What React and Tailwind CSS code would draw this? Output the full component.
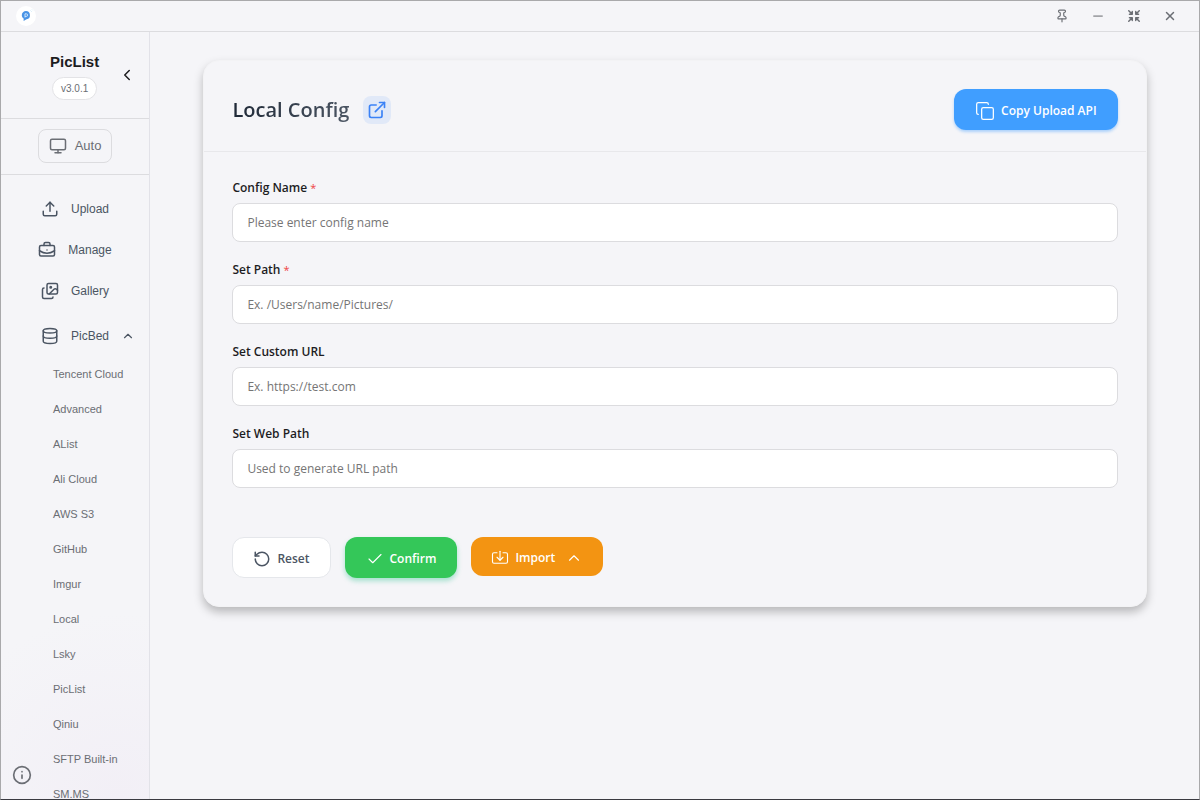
import {
  BriefcaseBusiness,
  Check,
  ChevronLeft,
  ChevronUp,
  Copy,
  Database,
  ExternalLink,
  Images,
  Import,
  Info,
  Minus,
  Monitor,
  Pin,
  RotateCcw,
  Shrink,
  Upload,
  X,
} from 'lucide-react';

const picBeds = [
  'Tencent Cloud',
  'Advanced',
  'AList',
  'Ali Cloud',
  'AWS S3',
  'GitHub',
  'Imgur',
  'Local',
  'Lsky',
  'PicList',
  'Qiniu',
  'SFTP Built-in',
  'SM.MS',
];

const fields = [
  { id: 'name', label: 'Config Name', placeholder: 'Please enter config name', required: true },
  { id: 'path', label: 'Set Path', placeholder: 'Ex. /Users/name/Pictures/', required: true },
  { id: 'customUrl', label: 'Set Custom URL', placeholder: 'Ex. https://test.com' },
  { id: 'webPath', label: 'Set Web Path', placeholder: 'Used to generate URL path' },
];

const Logo = () => (
  <svg viewBox="0 0 20 20" className="size-5" aria-hidden="true">
    <circle cx="10" cy="10" r="10" fill="#fff" />
    <path d="M10 5a4.2 4.2 0 0 0-4.2 4.2c0 1.5.8 2.7 1.9 3.4L7.6 15l3-1.7A4.2 4.2 0 0 0 10 5Z" fill="#4a94e6" />
    <path d="M9 11.5V7.8h1.3a1.3 1.3 0 0 1 0 2.6H9" fill="none" stroke="#d8ecff" strokeWidth="0.9" />
    <path d="M14.5 4.5l1.2 1.2M16 3.5l.8.8" stroke="#c5e6f8" strokeWidth="0.8" />
  </svg>
);

const TitleBar = () => (
  <header className="flex h-[31px] shrink-0 items-center justify-between border-b border-[#dcdcdf] pr-[21px] pl-[15px] text-[#6b6e74]">
    <Logo />
    <div className="flex items-center gap-5">
      <button type="button" aria-label="Pin window" className="flex size-4 items-center justify-center">
        <Pin size={14} />
      </button>
      <button type="button" aria-label="Minimize" className="flex size-4 items-center justify-center text-[#a3a4a8]">
        <Minus size={14} strokeWidth={3} />
      </button>
      <button type="button" aria-label="Restore" className="flex size-4 items-center justify-center">
        <Shrink size={14} strokeWidth={2.5} />
      </button>
      <button type="button" aria-label="Close" className="flex size-4 items-center justify-center">
        <X size={14} strokeWidth={2.5} />
      </button>
    </div>
  </header>
);

const NavItem = ({ icon: Icon, label }) => (
  <a href="#" className="flex h-[41px] items-center justify-center gap-3 text-[12px]">
    <Icon size={18} />
    {label}
  </a>
);

const Sidebar = () => (
  <aside className="relative flex w-[149px] shrink-0 flex-col border-r border-[#e2e2e8] bg-[radial-gradient(circle_at_80%_100%,#f2eff6_0%,#f5f5f8_24%)] font-['Liberation_Sans',sans-serif] text-[#4b5563]">
    <div className="flex h-[87px] shrink-0 items-center border-b border-[#dcdcdf] pr-[13px] pl-[49px]">
      <div className="flex flex-1 flex-col items-start pt-0.5">
        <span className="text-[15px] leading-5 font-bold text-[#1d1d1f]">PicList</span>
        <span className="mt-[5px] ml-[2px] flex h-[23px] items-center rounded-full border border-[#e3e3e6] bg-white px-2 text-[10px] text-[#6b6e74]">
          v3.0.1
        </span>
      </div>
      <button type="button" aria-label="Collapse sidebar" className="text-[#1d1d1f]">
        <ChevronLeft size={18} />
      </button>
    </div>
    <div className="flex h-14 shrink-0 items-center justify-center border-b border-[#dcdcdf] pb-0.5">
      <button
        type="button"
        className="flex h-[34px] items-center gap-2 rounded-lg border border-[#dcdcdf] px-[10px] text-[13px] text-[#6b6e74]"
      >
        <Monitor size={18} />
        Auto
      </button>
    </div>
    <nav className="min-h-0 flex-1 overflow-hidden pt-[13px]">
      <NavItem icon={Upload} label="Upload" />
      <NavItem icon={BriefcaseBusiness} label="Manage" />
      <NavItem icon={Images} label="Gallery" />
      <button type="button" className="flex h-[49px] w-full items-center gap-3 pl-10 text-[12px]">
        <Database size={18} />
        PicBed
        <ChevronUp size={14} />
      </button>
      <ul className="pl-[52px] text-[11px] text-[#6b6e74]">
        {picBeds.map((name) => (
          <li key={name}>
            <a href="#" className="flex h-[35px] items-center pb-1.5">
              {name}
            </a>
          </li>
        ))}
      </ul>
    </nav>
    <button type="button" aria-label="About" className="absolute bottom-[14px] left-[11px] text-[#6b6e74]">
      <Info size={20} />
    </button>
  </aside>
);

const Field = ({ id, label, placeholder, required }) => (
  <div className="flex flex-col gap-[7px]">
    <label htmlFor={id} className="text-[12px] leading-4 font-semibold text-[#1d1d1f]">
      {label}
      {required && <span className="ml-[3px] text-[11px] font-normal text-[#ef4444]">*</span>}
    </label>
    <input
      id={id}
      type="text"
      placeholder={placeholder}
      className="h-[39px] w-full rounded-lg border border-[#dcdcdf] bg-white px-[14px] text-[12px] text-[#1d1d1f] placeholder:text-[#757575]"
    />
  </div>
);

const ConfigCard = () => (
  <section className="mx-auto w-[90%] rounded-2xl border border-[#f3f3f5] bg-[#f5f5f8] shadow-[0_5px_10px_rgba(0,0,0,0.25)]">
    <div className="flex items-center justify-between border-b border-[#e8e8eb] px-7 pt-7 pb-[21px]">
      <div className="flex items-center gap-[14px]">
        <h1 className="bg-linear-to-r from-[#1f2937] to-[#4b5563] bg-clip-text text-[20px] leading-7 font-semibold text-transparent">
          Local Config
        </h1>
        <a
          href="#"
          aria-label="Open documentation"
          className="flex size-7 items-center justify-center rounded-lg bg-[#e1e9f8] text-[#3b82f6]"
        >
          <ExternalLink size={20} />
        </a>
      </div>
      <button
        type="button"
        className="flex h-[41px] items-center gap-[6px] rounded-xl bg-[#409eff] px-[21px] pt-0.5 text-[12px] font-semibold text-white shadow-[0_2px_3px_rgba(64,158,255,0.4)]"
      >
        <Copy size={20} strokeWidth={1.5} />
        Copy Upload API
      </button>
    </div>
    <form className="p-7">
      <div className="flex flex-col gap-5">
        {fields.map((field) => (
          <Field key={field.id} {...field} />
        ))}
      </div>
      <div className="mt-[49px] flex items-start gap-[14px] text-[12px] font-semibold">
        <button
          type="reset"
          className="flex h-[41px] items-center gap-[6px] rounded-xl border border-[#e5e7eb] bg-white px-5 pt-0.5 text-[#4b5563]"
        >
          <RotateCcw size={18} />
          Reset
        </button>
        <button
          type="button"
          className="flex h-[41px] items-center gap-[6px] rounded-xl bg-[#34c759] px-[21px] pt-0.5 text-white shadow-[0_3px_5px_rgba(16,185,129,0.35)]"
        >
          <Check size={18} strokeWidth={1.5} />
          Confirm
        </button>
        <button
          type="button"
          className="flex h-[39px] items-center gap-[6px] rounded-xl bg-[#f39412] px-5 pt-0.5 text-white"
        >
          <Import size={18} strokeWidth={1.5} />
          Import
          <ChevronUp size={18} strokeWidth={1.5} className="ml-1" />
        </button>
      </div>
    </form>
  </section>
);

const App = () => {
  return (
    <div className="flex h-screen flex-col overflow-hidden border border-[#a9a9ab] border-b-[#3a3a40] bg-[#f5f5f8] font-['Open_Sans','Noto_Sans',sans-serif]">
      <TitleBar />
      <div className="flex min-h-0 flex-1">
        <Sidebar />
        <main className="min-w-0 flex-1 overflow-y-auto pt-7 pl-px">
          <ConfigCard />
        </main>
      </div>
    </div>
  );
};

export default App;
